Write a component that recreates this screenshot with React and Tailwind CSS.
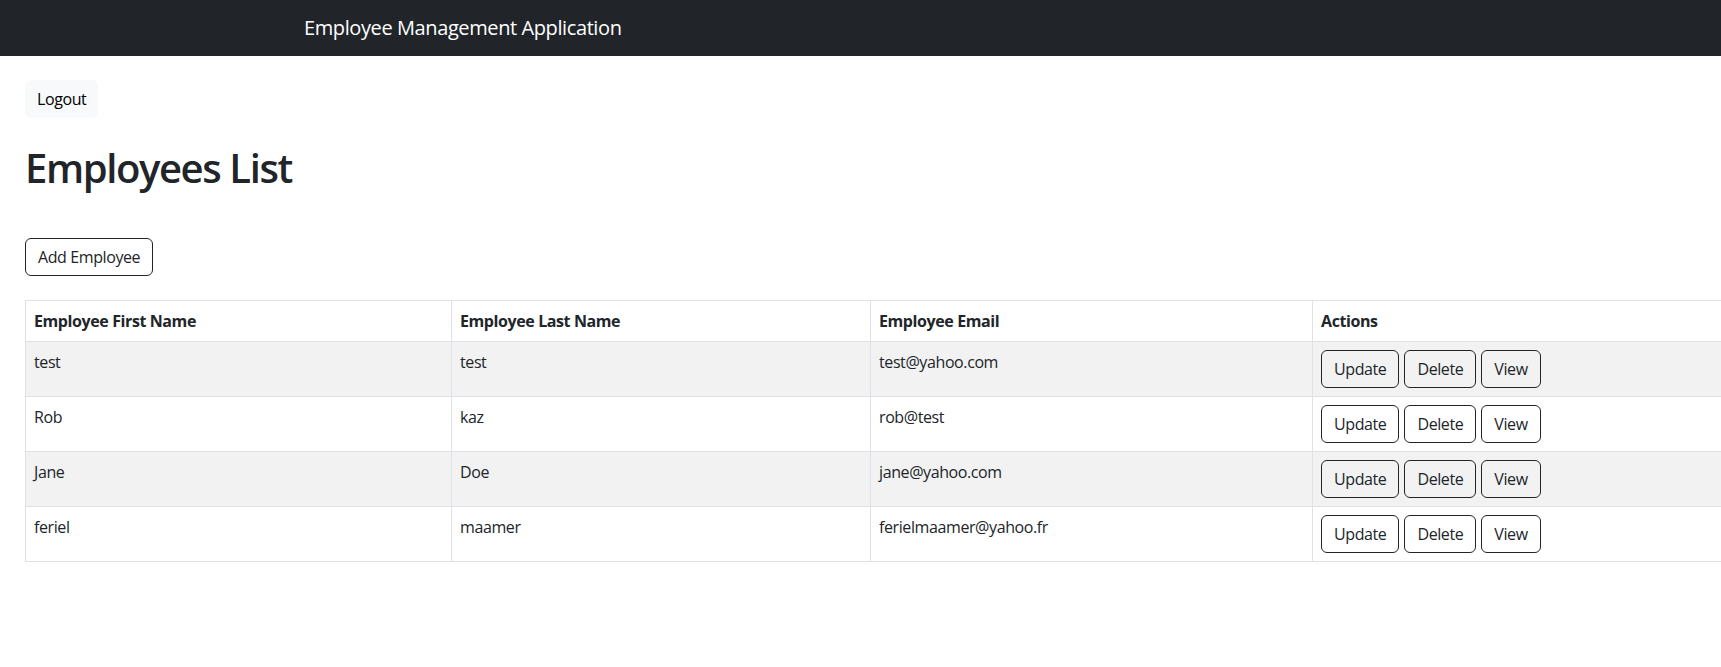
const rows = [
  { first: "test", last: "test", email: "test@yahoo.com" },
  { first: "Rob", last: "kaz", email: "rob@test" },
  { first: "Jane", last: "Doe", email: "jane@yahoo.com" },
  { first: "feriel", last: "maamer", email: "ferielmaamer@yahoo.fr" },
];

function ActionBtn({ children }) {
  return (
    <button className="h-[38px] px-3 rounded-md border border-[#212529] text-base leading-6 text-[#212529] bg-transparent">
      {children}
    </button>
  );
}

export default function App() {
  return (
    <div className="min-h-[667px] w-full overflow-hidden bg-white text-[#212529] font-['Open_Sans',sans-serif] tracking-[-0.025em]">
      <nav className="h-14 bg-[#212529] flex items-center">
        <span className="ml-[304px] text-[20px] leading-[30px] text-white">
          Employee Management Application
        </span>
      </nav>
      <div className="pl-[25px]">
        <button className="mt-6 h-[38px] px-3 rounded-md bg-[#f8f9fa] text-base leading-6 text-black">
          Logout
        </button>
        <h1 className="mt-[26px] text-[40px] font-semibold leading-[48px] tracking-[-0.035em]">Employees List</h1>
        <button className="mt-[46px] h-[38px] px-3 rounded-md border border-[#212529] text-base leading-6 bg-white">
          Add Employee
        </button>
        <table className="mt-6 w-[1720px] table-fixed border-collapse border border-[#dee2e6] text-base leading-6">
          <colgroup>
            <col className="w-[426px]" />
            <col className="w-[419px]" />
            <col className="w-[442px]" />
            <col />
          </colgroup>
          <thead>
            <tr>
              <th className="border border-[#dee2e6] p-2 text-left font-bold align-bottom">Employee First Name</th>
              <th className="border border-[#dee2e6] p-2 text-left font-bold align-bottom">Employee Last Name</th>
              <th className="border border-[#dee2e6] p-2 text-left font-bold align-bottom">Employee Email</th>
              <th className="border border-[#dee2e6] p-2 text-left font-bold align-bottom">Actions</th>
            </tr>
          </thead>
          <tbody>
            {rows.map((r, i) => (
              <tr key={i} className={i % 2 === 0 ? "bg-[#f2f2f2]" : "bg-white"}>
                <td className="border border-[#dee2e6] p-2 align-top">{r.first}</td>
                <td className="border border-[#dee2e6] p-2 align-top">{r.last}</td>
                <td className="border border-[#dee2e6] p-2 align-top">{r.email}</td>
                <td className="border border-[#dee2e6] p-2 align-top">
                  <div className="flex gap-[5px]">
                    <ActionBtn>Update</ActionBtn>
                    <ActionBtn>Delete</ActionBtn>
                    <ActionBtn>View</ActionBtn>
                  </div>
                </td>
              </tr>
            ))}
          </tbody>
        </table>
      </div>
    </div>
  );
}
